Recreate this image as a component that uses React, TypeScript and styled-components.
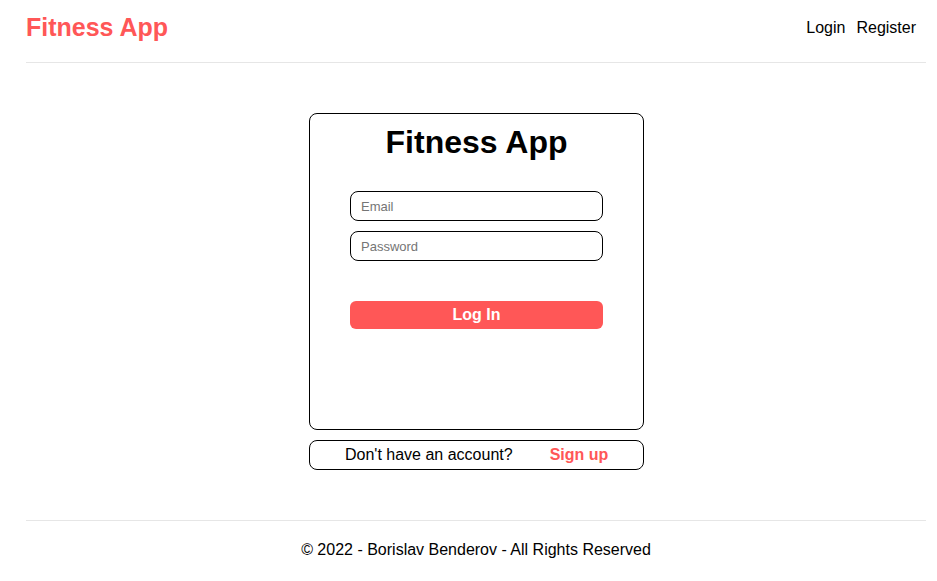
import React from "react";
import styled, { createGlobalStyle } from "styled-components";

const Global = createGlobalStyle`
  html, body { margin: 0; padding: 0; background: #fff; }
  body { font-family: "Liberation Sans", Arial, sans-serif; color: #000; }
  * { box-sizing: border-box; }
`;

const Page = styled.div`
  display: flex;
  flex-direction: column;
  padding: 0 11px 0 26px;
`;

const Header = styled.header`
  display: flex;
  align-items: center;
  justify-content: space-between;
  height: 63px;
  padding: 0 10px 8px 0;
  border-bottom: 1px solid #e6e6e6;
`;

const Logo = styled.a`
  color: #ff5757;
  font-weight: bold;
  font-size: 25px;
  text-decoration: none;
`;

const Nav = styled.nav`
  display: flex;
  gap: 11px;
  padding-top: 2px;
`;

const NavLink = styled.a`
  color: #000;
  font-size: 16px;
  text-decoration: none;
`;

const Main = styled.main`
  display: flex;
  flex-direction: column;
  align-items: center;
  padding: 50px 0 50px;
  margin-left: 1px;
`;

const Card = styled.form`
  width: 335px;
  height: 317px;
  border: 1px solid #000;
  border-radius: 8px;
  display: flex;
  flex-direction: column;
  align-items: center;
  padding-top: 10px;
`;

const Title = styled.h1`
  margin: 0 0 31px;
  font-size: 32px;
  font-weight: bold;
  line-height: 36px;
`;

const Input = styled.input`
  width: 253px;
  height: 30px;
  border: 1px solid #000;
  border-radius: 8px;
  padding: 0 10px;
  font-family: "Liberation Sans", Arial, sans-serif;
  font-size: 13px;
  margin-bottom: 10px;
  outline: none;
  &::placeholder { color: #757575; }
`;

const Button = styled.button`
  width: 253px;
  height: 28px;
  margin-top: 30px;
  border: none;
  border-radius: 6px;
  background: #ff5757;
  color: #fff;
  font-family: "Liberation Sans", Arial, sans-serif;
  font-weight: bold;
  font-size: 16px;
`;

const SignupBox = styled.div`
  width: 335px;
  height: 30px;
  margin-top: 10px;
  border: 1px solid #000;
  border-radius: 8px;
  display: flex;
  align-items: center;
  padding-left: 35px;
  gap: 37px;
  font-size: 16px;
`;

const SignupLink = styled.a`
  color: #ff5757;
  font-weight: bold;
  text-decoration: none;
`;

const Footer = styled.footer`
  border-top: 1px solid #e6e6e6;
  height: 61px;
  display: flex;
  align-items: center;
  justify-content: center;
  font-size: 16px;
  padding-bottom: 3px;
`;

export default function App() {
  return (
    <>
      <Global />
      <Page>
        <Header>
          <Logo href="#">Fitness App</Logo>
          <Nav>
            <NavLink href="#">Login</NavLink>
            <NavLink href="#">Register</NavLink>
          </Nav>
        </Header>
        <Main>
          <Card onSubmit={(e) => e.preventDefault()}>
            <Title>Fitness App</Title>
            <Input type="email" placeholder="Email" />
            <Input type="password" placeholder="Password" />
            <Button type="submit">Log In</Button>
          </Card>
          <SignupBox>
            <span>Don't have an account?</span>
            <SignupLink href="#">Sign up</SignupLink>
          </SignupBox>
        </Main>
        <Footer>© 2022 - Borislav Benderov - All Rights Reserved</Footer>
      </Page>
    </>
  );
}
